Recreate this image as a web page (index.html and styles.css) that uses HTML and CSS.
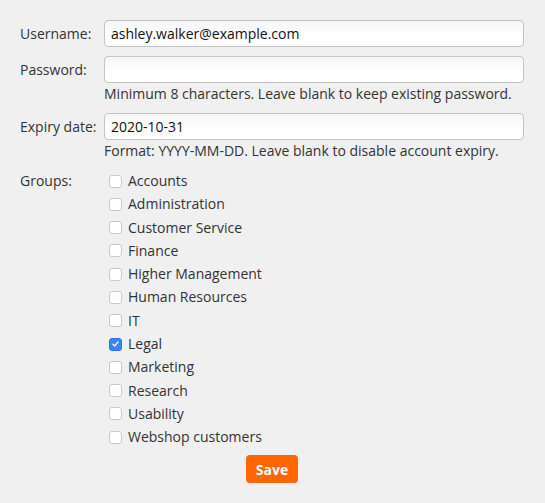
FILE: index.html
```
<!DOCTYPE html>
<html>
<head>
<meta charset="utf-8">
<link rel="stylesheet" href="styles.css">
</head>
<body>
<form class="form">
  <div class="row">
    <label class="lbl">Username:</label>
    <div class="field"><input class="txt" type="text" value="ashley.walker@example.com"></div>
  </div>
  <div class="row">
    <label class="lbl">Password:</label>
    <div class="field"><input class="txt" type="password" value="">
      <div class="hint">Minimum 8 characters. Leave blank to keep existing password.</div></div>
  </div>
  <div class="row">
    <label class="lbl">Expiry date:</label>
    <div class="field"><input class="txt" type="text" value="2020-10-31">
      <div class="hint">Format: YYYY-MM-DD. Leave blank to disable account expiry.</div></div>
  </div>
  <div class="row groups">
    <label class="lbl">Groups:</label>
    <div class="field list">
      <label class="item"><span class="cb"></span>Accounts</label>
      <label class="item"><span class="cb"></span>Administration</label>
      <label class="item"><span class="cb"></span>Customer Service</label>
      <label class="item"><span class="cb"></span>Finance</label>
      <label class="item"><span class="cb"></span>Higher Management</label>
      <label class="item"><span class="cb"></span>Human Resources</label>
      <label class="item"><span class="cb"></span>IT</label>
      <label class="item"><span class="cb on"><svg viewBox="0 0 12 12" width="12" height="12"><path d="M3.3 6.2 L5.2 8.1 L8.8 3.8" fill="none" stroke="#fff" stroke-width="1.4" stroke-linecap="round" stroke-linejoin="round"/></svg></span>Legal</label>
      <label class="item"><span class="cb"></span>Marketing</label>
      <label class="item"><span class="cb"></span>Research</label>
      <label class="item"><span class="cb"></span>Usability</label>
      <label class="item"><span class="cb"></span>Webshop customers</label>
    </div>
  </div>
  <div class="actions"><button class="save" type="button">Save</button></div>
</form>
</body>
</html>
```
FILE: styles.css
```
html, body {
  margin: 0;
  padding: 0;
  background: #f0f0f0;
}
body {
  font-family: "Open Sans", "DejaVu Sans", sans-serif;
  font-size: 14px;
  color: #333;
}
.form {
  padding: 20px 21px 0 20px;
  display: flex;
  flex-direction: column;
  gap: 9px;
}
.row {
  display: flex;
  align-items: flex-start;
}
.lbl {
  width: 84px;
  flex: none;
  line-height: 27px;
}
.field {
  flex: 1;
  display: flex;
  flex-direction: column;
}
.txt {
  box-sizing: border-box;
  height: 27px;
  width: 100%;
  margin: 0;
  border: 1px solid #c4c4c4;
  border-radius: 4px;
  background: linear-gradient(#f6f6f6, #ffffff 60%);
  padding: 0 6px;
  font-family: inherit;
  font-size: 14px;
  color: #111;
  outline: none;
}
.hint {
  line-height: 20px;
  padding-top: 1px;
}
.groups {
  margin-top: 1px;
}
.groups .lbl {
  line-height: 20px;
}
.list {
  gap: 3.3px;
}
.item {
  display: flex;
  align-items: center;
  line-height: 20px;
  padding-left: 5px;
}
.cb {
  box-sizing: border-box;
  width: 13px;
  height: 13px;
  border: 1px solid #c9c9c9;
  border-radius: 3px;
  background: #fff;
  margin-right: 6px;
  display: flex;
  align-items: center;
  justify-content: center;
}
.cb.on {
  background: #3d84f5;
  border-color: #2f72e0;
}
.actions {
  display: flex;
  justify-content: center;
  margin-top: -1px;
}
.save {
  font-family: inherit;
  font-size: 14px;
  font-weight: bold;
  color: #fff;
  background: #ff6600;
  border: none;
  border-radius: 4px;
  height: 28px;
  width: 52px;
  padding: 0;
}
```
